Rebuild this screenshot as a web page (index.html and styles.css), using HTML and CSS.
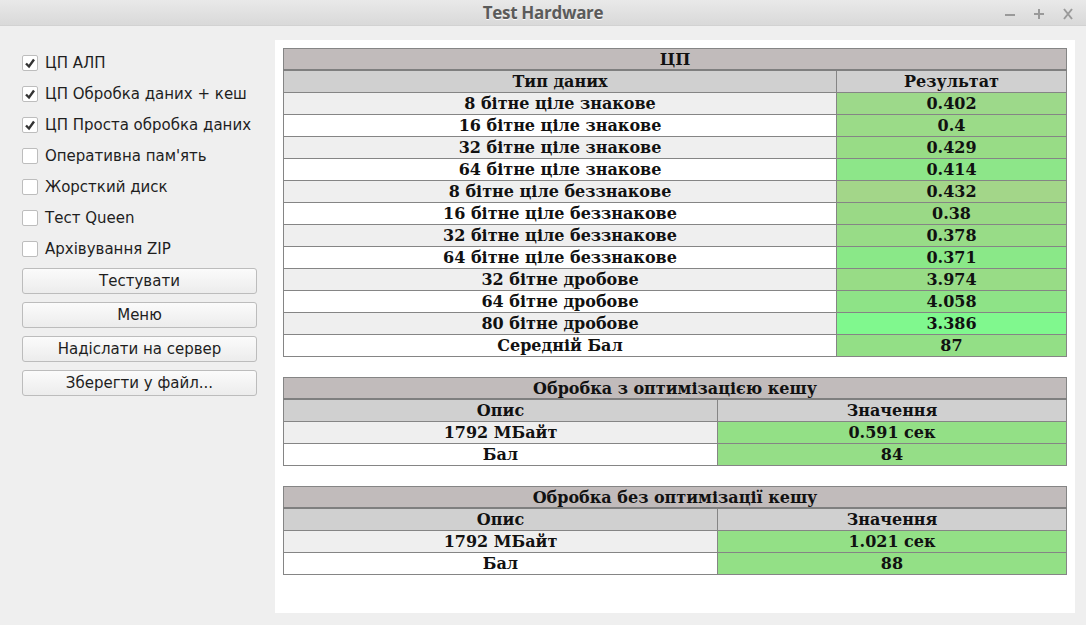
FILE: index.html
```html
<!DOCTYPE html>
<html lang="uk">
<head>
<meta charset="utf-8">
<title>Test Hardware</title>
<link rel="stylesheet" href="styles.css">
</head>
<body>
<div class="window">
  <div class="titlebar">
    <span class="title">Test Hardware</span>
    <div class="controls">
      <svg class="ctl" width="12" height="12" viewBox="0 0 12 12"><path d="M1 7h10" stroke="#9a9a9a" stroke-width="2"/></svg>
      <svg class="ctl" width="12" height="12" viewBox="0 0 12 12"><path d="M1 6h10M6 1v10" stroke="#9a9a9a" stroke-width="2"/></svg>
      <svg class="ctl" width="12" height="12" viewBox="0 0 12 12"><path d="M2 1l8 10M10 1L2 11" stroke="#9a9a9a" stroke-width="2"/></svg>
    </div>
  </div>
  <div class="main">
    <div class="sidebar">
      <label class="check"><span class="box on"><svg width="12" height="12" viewBox="0 0 12 12"><path d="M2 6.5l3 3 5-7" stroke="#333" stroke-width="2.4" fill="none"/></svg></span>ЦП АЛП</label>
      <label class="check"><span class="box on"><svg width="12" height="12" viewBox="0 0 12 12"><path d="M2 6.5l3 3 5-7" stroke="#333" stroke-width="2.4" fill="none"/></svg></span>ЦП Обробка даних + кеш</label>
      <label class="check"><span class="box on"><svg width="12" height="12" viewBox="0 0 12 12"><path d="M2 6.5l3 3 5-7" stroke="#333" stroke-width="2.4" fill="none"/></svg></span>ЦП Проста обробка даних</label>
      <label class="check"><span class="box"></span>Оперативна пам'ять</label>
      <label class="check"><span class="box"></span>Жорсткий диск</label>
      <label class="check"><span class="box"></span>Тест Queen</label>
      <label class="check"><span class="box"></span>Архівування ZIP</label>
      <div class="buttons">
        <button class="btn">Тестувати</button>
        <button class="btn">Меню</button>
        <button class="btn">Надіслати на сервер</button>
        <button class="btn">Зберегти у файл...</button>
      </div>
    </div>
    <div class="panel">
      <table class="res t1">
        <tr><th class="cap" colspan="2">ЦП</th></tr>
        <tr class="head"><th class="c1">Тип даних</th><th>Результат</th></tr>
        <tr class="odd"><td>8 бітне ціле знакове</td><td class="val" style="background:#9dd98a">0.402</td></tr>
        <tr><td>16 бітне ціле знакове</td><td class="val" style="background:#9bdb88">0.4</td></tr>
        <tr class="odd"><td>32 бітне ціле знакове</td><td class="val" style="background:#98dc86">0.429</td></tr>
        <tr><td>64 бітне ціле знакове</td><td class="val" style="background:#8de689">0.414</td></tr>
        <tr class="odd"><td>8 бітне ціле беззнакове</td><td class="val" style="background:#a3d689">0.432</td></tr>
        <tr><td>16 бітне ціле беззнакове</td><td class="val" style="background:#9ad986">0.38</td></tr>
        <tr class="odd"><td>32 бітне ціле беззнакове</td><td class="val" style="background:#98dc87">0.378</td></tr>
        <tr><td>64 бітне ціле беззнакове</td><td class="val" style="background:#8ae888">0.371</td></tr>
        <tr class="odd"><td>32 бітне дробове</td><td class="val" style="background:#98dc86">3.974</td></tr>
        <tr><td>64 бітне дробове</td><td class="val" style="background:#8ee387">4.058</td></tr>
        <tr class="odd"><td>80 бітне дробове</td><td class="val" style="background:#80f88e">3.386</td></tr>
        <tr><td>Середній Бал</td><td class="val" style="background:#93df86">87</td></tr>
      </table>
      <table class="res t2">
        <tr><th class="cap" colspan="2">Обробка з оптимізацією кешу</th></tr>
        <tr class="head"><th class="c1">Опис</th><th>Значення</th></tr>
        <tr class="odd"><td>1792 МБайт</td><td class="val" style="background:#93e086">0.591 сек</td></tr>
        <tr><td>Бал</td><td class="val" style="background:#95de87">84</td></tr>
      </table>
      <table class="res t2">
        <tr><th class="cap" colspan="2">Обробка без оптимізації кешу</th></tr>
        <tr class="head"><th class="c1">Опис</th><th>Значення</th></tr>
        <tr class="odd"><td>1792 МБайт</td><td class="val" style="background:#93e086">1.021 сек</td></tr>
        <tr><td>Бал</td><td class="val" style="background:#93e086">88</td></tr>
      </table>
    </div>
  </div>
</div>
</body>
</html>
```
FILE: styles.css
```css
html, body {
  margin: 0;
  padding: 0;
  background: #efefef;
}
.window {
  width: 1086px;
  height: 625px;
  display: flex;
  flex-direction: column;
  background: #efefef;
  font-family: "DejaVu Sans", sans-serif;
}
.titlebar {
  height: 26px;
  flex: none;
  background: linear-gradient(#e9e9e9, #d9d9d9);
  border-bottom: 1px solid #d2d2d2;
  box-sizing: border-box;
  position: relative;
  display: flex;
  align-items: center;
  justify-content: center;
}
.title {
  font-family: "Open Sans", "DejaVu Sans", sans-serif;
  font-weight: 700;
  font-size: 17px;
  letter-spacing: -0.3px;
  color: #5b5b5b;
  text-shadow: 0 1px 0 #f8f8f8;
}
.controls {
  position: absolute;
  right: 12px;
  top: 8px;
  display: flex;
  gap: 17px;
}
.ctl { display: block; }
.main {
  flex: 1;
  display: flex;
  padding: 14px 11px 12px 22px;
  gap: 18px;
}
.sidebar {
  width: 235px;
  flex: none;
  display: flex;
  flex-direction: column;
  padding-top: 7px;
}
.check {
  height: 31px;
  display: flex;
  align-items: center;
  font-size: 15px;
  color: #1e1e1e;
}
.box {
  width: 14px;
  height: 14px;
  border: 1px solid #bdbdbd;
  border-radius: 2px;
  background: #fff;
  margin-right: 7px;
  display: flex;
  align-items: center;
  justify-content: center;
}
.buttons {
  margin-top: 4px;
  display: flex;
  flex-direction: column;
  gap: 8px;
}
.btn {
  height: 26px;
  width: 235px;
  border: 1px solid #bcbcbc;
  border-radius: 3px;
  background: linear-gradient(#fbfbfb, #ececec);
  font-family: "DejaVu Sans", sans-serif;
  font-size: 15px;
  color: #1e1e1e;
  padding: 0;
}
.panel {
  flex: 1;
  background: #fff;
  padding: 8px;
  display: flex;
  flex-direction: column;
  gap: 20px;
}
.res {
  width: 100%;
  border-collapse: collapse;
  font-family: "DejaVu Serif", serif;
  font-weight: 700;
  font-size: 16px;
  color: #111;
  border: 1px solid #7f7f7f;
}
.res th, .res td {
  border: 1px solid #858585;
  height: 20px;
  padding: 1px 0 0;
  text-align: center;
  line-height: 20px;
}
.res th.cap {
  background: #c1bbbb;
  border-bottom: 2px solid #7f7f7f;
  height: 18px;
  line-height: 19px;
}
.res .head th {
  background: #d0d0d0;
}
.res tr.odd td {
  background: #efefef;
}
.res td { background: #fff; }
.t1 .c1 { width: 552px; }
.t2 .c1 { width: 433px; }
```
